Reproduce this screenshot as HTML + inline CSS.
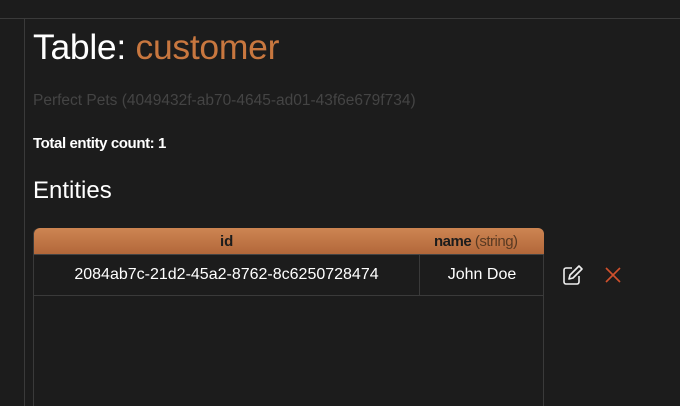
<!DOCTYPE html>
<html style="overflow:hidden;height:406px"><head><style>
body{margin:0;width:680px;height:406px;background:#1c1c1c;font-family:"Liberation Sans",sans-serif;color:#fff;position:relative;overflow:hidden}
.top{position:absolute;left:0;top:18px;width:680px;height:1px;background:#3a3a3a}
.vl{position:absolute;left:24px;top:19px;width:1px;height:387px;background:#3a3a3a}
.t{position:absolute;left:33px;top:27px;font-size:35.5px;letter-spacing:-0.3px}
.t span{color:#c8773f}
.sub{position:absolute;left:33px;top:92px;font-size:15.5px;color:#444}
.cnt{position:absolute;left:33px;top:135px;font-size:15px;font-weight:bold;letter-spacing:-0.4px}
.ent{position:absolute;left:33px;top:177px;font-size:24px}
.tbl{position:absolute;left:33px;top:228px;width:509px;height:190px;border:1px solid #3a3a3a;border-top:none;border-radius:6px 6px 0 0}
.hd{position:absolute;left:0;top:0;width:510px;height:26px;background:linear-gradient(#cd8552,#b2673a);border-radius:6px 6px 0 0;border-bottom:1px solid #444;font-size:15px;font-weight:bold;color:#1c1c1c}
.row{position:absolute;left:0;top:27px;width:509px;height:40px;border-bottom:1px solid #3a3a3a;font-size:16px}
.c1{position:absolute;left:0;width:385px;text-align:center;line-height:40px}
.c2{position:absolute;left:385px;width:124px;text-align:center;line-height:40px;border-left:1px solid #3a3a3a;height:40px}
</style></head><body>
<div class="top"></div><div class="vl"></div>
<div class="t">Table: <span>customer</span></div>
<div class="sub">Perfect Pets (4049432f-ab70-4645-ad01-43f6e679f734)</div>
<div class="cnt">Total entity count: 1</div>
<div class="ent">Entities</div>
<div class="tbl">
<div class="hd"><span style="position:absolute;left:186px;top:5px">id</span><span style="position:absolute;left:400px;top:5px;letter-spacing:-0.5px">name <span style="color:#5a3a22;font-weight:normal">(string)</span></span></div>
<div class="row"><div class="c1">2084ab7c-21d2-45a2-8762-8c6250728474</div><div class="c2">John Doe</div></div>
</div>
<svg style="position:absolute;left:562px;top:264px" width="22" height="22" viewBox="0 0 22 22" fill="none" stroke="#eee" stroke-width="1.6" stroke-linejoin="round"><path d="M10 4H4a2 2 0 0 0-2 2v12a2 2 0 0 0 2 2h11a2 2 0 0 0 2-2v-6"/><path d="M17 2l3 3-9 9-4 1 1-4z"/></svg>
<svg style="position:absolute;left:605px;top:267px" width="16" height="16" viewBox="0 0 16 16" stroke="#d0502c" stroke-width="1.6"><path d="M1 1L15 15M15 1L1 15"/></svg>
</body></html>
